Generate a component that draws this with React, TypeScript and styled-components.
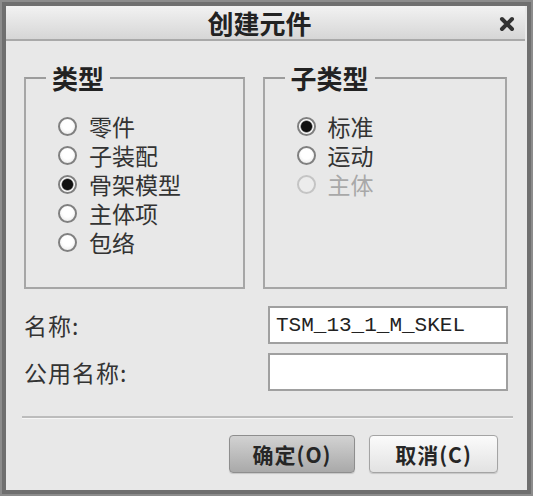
import styled, { createGlobalStyle } from "styled-components";

const GlobalStyle = createGlobalStyle`
  html, body {
    margin: 0;
    padding: 0;
    background: #7a7a7a;
  }
  * {
    box-sizing: border-box;
  }
`;

const FONT = `"Noto Sans CJK SC", "Noto Sans", sans-serif`;

const Window = styled.div`
  width: 533px;
  height: 496px;
  border: 2px solid #8c8c8c;
  box-shadow: inset 0 0 0 4px #6f6f6f;
  background: #e8e8e8;
  padding: 4px 6px 8px 4px;
  display: flex;
  flex-direction: column;
  font-family: ${FONT};
  color: #2a2a2a;
`;

const TitleBar = styled.div`
  position: relative;
  height: 35px;
  flex: none;
  background: linear-gradient(to bottom, #f2f2f2, #d6d6d6);
  border-bottom: 2px solid #a9a9a9;
  display: flex;
  align-items: center;
  justify-content: center;
`;

const Title = styled.div`
  font-size: 26px;
  line-height: 30px;
  font-weight: 700;
  color: #222;
  margin-left: -12px;
`;

const CloseButton = styled.div`
  position: absolute;
  right: 9px;
  top: 8px;
  width: 18px;
  height: 18px;
`;

const Body = styled.div`
  flex: 1;
  padding: 25px 18px 0 18px;
  display: flex;
  flex-direction: column;
`;

const Groups = styled.div`
  display: flex;
  gap: 18px;
`;

const Group = styled.fieldset<{ $width: number }>`
  width: ${(p) => p.$width}px;
  height: 223px;
  margin: 0;
  padding: 0 0 0 20px;
  border: 2px solid #a6a6a6;
  border-top-color: #9c9c9c;
`;

const Legend = styled.legend`
  padding: 0 6px;
  font-size: 26px;
  line-height: 24px;
  font-weight: 700;
  color: #222;
`;

const OptionList = styled.div`
  display: flex;
  flex-direction: column;
  padding: 22px 0 0 12px;
`;

const Option = styled.label<{ $disabled?: boolean }>`
  display: flex;
  align-items: center;
  height: 29px;
  line-height: 29px;
  font-size: 23px;
  color: ${(p) => (p.$disabled ? "#a8a8a8" : "#333")};
`;

const RadioDot = styled.span<{ $checked?: boolean; $disabled?: boolean }>`
  width: 19px;
  height: 19px;
  border-radius: 50%;
  margin-right: 12px;
  flex: none;
  border: 2px solid ${(p) => (p.$disabled ? "#c4c4c4" : "#808080")};
  background: ${(p) =>
    p.$checked
      ? "radial-gradient(circle, #111 0 5px, #555 5.5px, #fff 6.5px)"
      : p.$disabled
      ? "#ececec"
      : "radial-gradient(circle at 50% 40%, #fff 0 5px, #eee 9px)"};
`;

const FieldRow = styled.div<{ $top: number }>`
  display: flex;
  align-items: center;
  justify-content: space-between;
  margin-top: ${(p) => p.$top}px;
  margin-right: -1px;
`;

const FieldLabel = styled.span`
  font-size: 23px;
  line-height: 30px;
  color: #333;
  letter-spacing: 1px;
`;

const TextBox = styled.div`
  width: 240px;
  height: 38px;
  border: 2px solid #a0a0a0;
  background: #fff;
  padding: 0 6px;
  display: flex;
  align-items: center;
  font-family: "Liberation Mono", "DejaVu Sans Mono", monospace;
  font-size: 21px;
  color: #222;
`;

const Footer = styled.div`
  margin-top: auto;
  border-top: 2px solid #bcbcbc;
  box-shadow: inset 0 1px 0 #f6f6f6;
  height: 70px;
  flex: none;
  display: flex;
  justify-content: flex-end;
  align-items: flex-start;
  gap: 14px;
  padding: 17px 15px 0 0;
  margin-left: -2px;
  margin-right: -6px;
`;

const Button = styled.button<{ $primary?: boolean }>`
  height: 38px;
  width: ${(p) => (p.$primary ? 126 : 129)}px;
  border-radius: 4px;
  border: 1px solid ${(p) => (p.$primary ? "#8e8e8e" : "#a4a4a4")};
  background: ${(p) =>
    p.$primary
      ? "linear-gradient(to bottom, #d2d2d2, #a9a9a9)"
      : "linear-gradient(to bottom, #fbfbfb, #e2e2e2)"};
  box-shadow: 0 1px 1px rgba(0, 0, 0, 0.15);
  font-family: ${FONT};
  font-size: 21px;
  font-weight: 700;
  color: #262626;
  letter-spacing: 1px;
  padding: 0;
`;

const typeOptions = ["零件", "子装配", "骨架模型", "主体项", "包络"];
const subOptions = [
  { label: "标准", checked: true },
  { label: "运动" },
  { label: "主体", disabled: true },
];

function App() {
  return (
    <>
      <GlobalStyle />
      <Window>
        <TitleBar>
          <Title>创建元件</Title>
          <CloseButton>
            <svg width="18" height="18" viewBox="0 0 18 18">
              <path d="M4 4 L14 14 M14 4 L4 14" stroke="#333" strokeWidth="4" strokeLinecap="round" />
            </svg>
          </CloseButton>
        </TitleBar>
        <Body>
          <Groups>
            <Group $width={222}>
              <Legend>类型</Legend>
              <OptionList>
                {typeOptions.map((label, i) => (
                  <Option key={label}>
                    <RadioDot $checked={i === 2} />
                    {label}
                  </Option>
                ))}
              </OptionList>
            </Group>
            <Group $width={246}>
              <Legend>子类型</Legend>
              <OptionList>
                {subOptions.map((o) => (
                  <Option key={o.label} $disabled={o.disabled}>
                    <RadioDot $checked={o.checked} $disabled={o.disabled} />
                    {o.label}
                  </Option>
                ))}
              </OptionList>
            </Group>
          </Groups>
          <FieldRow $top={17}>
            <FieldLabel>名称:</FieldLabel>
            <TextBox>TSM_13_1_M_SKEL</TextBox>
          </FieldRow>
          <FieldRow $top={9}>
            <FieldLabel>公用名称:</FieldLabel>
            <TextBox />
          </FieldRow>
          <Footer>
            <Button $primary>确定(O)</Button>
            <Button>取消(C)</Button>
          </Footer>
        </Body>
      </Window>
    </>
  );
}

export default App;
